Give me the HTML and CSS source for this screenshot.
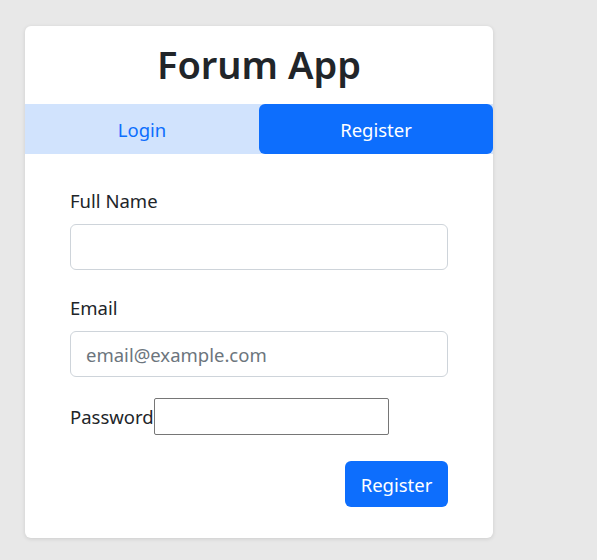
FILE: index.html
```html
<!DOCTYPE html>
<html>
<head>
<meta charset="utf-8">
<link rel="stylesheet" href="styles.css">
</head>
<body>
<div class="card">
  <h1 class="title">Forum App</h1>
  <div class="tabs">
    <div class="tab">Login</div>
    <div class="tab active">Register</div>
  </div>
  <form class="form">
    <div class="field">
      <label class="label">Full Name</label>
      <input class="input" type="text">
    </div>
    <div class="field field-last">
      <label class="label">Email</label>
      <input class="input" type="email" placeholder="email@example.com">
    </div>
    <div class="pw-row">
      <label class="pw-label">Password</label><input class="raw" type="password">
    </div>
    <div class="actions">
      <button class="btn" type="button">Register</button>
    </div>
  </form>
</div>
</body>
</html>
```
FILE: styles.css
```css
* { box-sizing: border-box; }
html, body { margin: 0; padding: 0; }
body {
  background: #e8e8e8;
  font-family: "Noto Sans", "Open Sans", sans-serif;
  color: #212529;
  padding: 26px 0 0 25px;
  height: 560px;
}
.card {
  width: 468px;
  background: #fff;
  border-radius: 6px;
  box-shadow: 0 1px 4px rgba(0,0,0,0.12);
  padding-top: 16px;
}
.title {
  margin: 0 0 18px;
  text-align: center;
  font-size: 38px;
  font-weight: 600;
  line-height: 44px;
  color: #212529;
}
.tabs {
  display: flex;
  background: #d1e3fd;
  height: 50px;
}
.tab {
  flex: 1;
  display: flex;
  align-items: center;
  justify-content: center;
  font-size: 18.5px;
  color: #0d6efd;
}
.tab.active {
  background: #0d6efd;
  color: #fff;
  border-radius: 6px;
}
.form {
  padding: 32px 45px 31px;
}
.field { margin-bottom: 23px; }
.field-last { margin-bottom: 21px; }
.label {
  display: block;
  font-size: 18.5px;
  line-height: 29px;
  margin-bottom: 9px;
}
.input {
  display: block;
  width: 100%;
  height: 46px;
  border: 1px solid #ced4da;
  border-radius: 6px;
  padding: 0 15px;
  font-family: inherit;
  font-size: 18.5px;
  color: #212529;
}
.input::placeholder { color: #6c757d; }
.pw-row {
  display: flex;
  align-items: center;
  height: 37px;
}
.pw-label { font-size: 18.5px; }
.raw {
  width: 235px;
  height: 37px;
  border: 1px solid #767676;
  border-radius: 2px;
  margin: 0;
}
.actions {
  display: flex;
  justify-content: flex-end;
  margin-top: 26px;
}
.btn {
  height: 46px;
  width: 103px;
  background: #0d6efd;
  color: #fff;
  border: none;
  border-radius: 6px;
  font-family: inherit;
  font-size: 18.5px;
  padding: 0;
}
```
